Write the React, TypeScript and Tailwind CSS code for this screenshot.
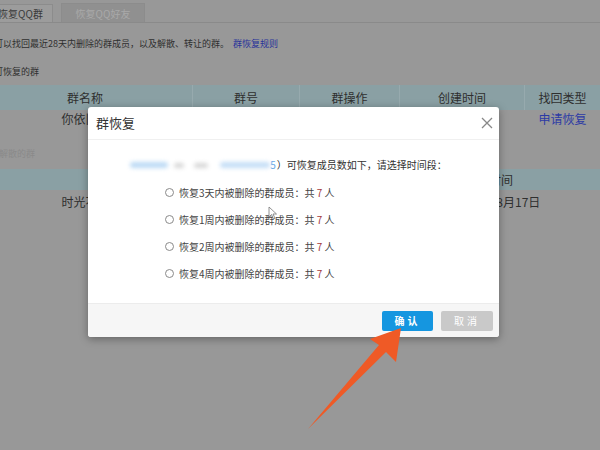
import React from 'react';

const font = { fontFamily: '"Noto Sans CJK SC", "Noto Sans", sans-serif' };

const options = ['恢复3天内被删除的群成员', '恢复1周内被删除的群成员', '恢复2周内被删除的群成员', '恢复4周内被删除的群成员'];

function Page() {
  return (
    <div className="h-[450px] w-[600px] overflow-hidden bg-[#989898] text-[#2f2f2f]" style={font}>
      {/* tabs */}
      <div className="flex h-[23px] items-end gap-[8px] border-b border-[#8a8a8a]">
        <div className="-ml-[12px] flex h-[18px] w-[65px] items-center justify-center border border-b-0 border-[#8c8c8c] bg-[#9c9c9c] text-[10px] text-[#3a3a3a]">
          恢复QQ群
        </div>
        <div className="flex h-[19px] w-[84px] items-center justify-center border border-b-0 border-[#8c8c8c] bg-[#909090] text-[10px] text-[#a9a9a9]">
          恢复QQ好友
        </div>
      </div>

      <div className="-ml-[6px] mt-[15px] text-[9px] leading-[12px]">
        可以找回最近28天内删除的群成员，以及解散、转让的群。 <span className="ml-[2px] text-[#28339a]">群恢复规则</span>
      </div>
      <div className="-ml-[6px] mt-[16px] text-[9px] leading-[12px]">可恢复的群</div>

      {/* first table */}
      <div className="-ml-[22px] mt-[7px] w-[622px]">
        <div className="grid h-[25px] grid-cols-[215px_107px_100px_125px_75px] bg-[#8aa0a4] text-[12px]">
          <div className="flex items-center justify-center border-r border-[#97aaae]">群名称</div>
          <div className="flex items-center justify-center border-r border-[#97aaae]">群号</div>
          <div className="flex items-center justify-center border-r border-[#97aaae]">群操作</div>
          <div className="flex items-center justify-center border-r border-[#97aaae]">创建时间</div>
          <div className="flex items-center justify-center">找回类型</div>
        </div>
        <div className="grid h-[18px] grid-cols-[215px_107px_100px_125px_75px] text-[12px]">
          <div className="flex items-center justify-center">你依旧在</div>
          <div />
          <div />
          <div />
          <div className="flex items-center justify-center text-[#2c3aa5]">申请恢复</div>
        </div>
      </div>

      <div className="-ml-[10px] mt-[20px] text-[9px] leading-[12px] text-[#8a8a8a]">已解散的群</div>

      {/* second table */}
      <div className="-ml-[22px] mt-[9px] w-[622px]">
        <div className="grid h-[21px] grid-cols-[215px_207px_200px] bg-[#8aa0a4] text-[12px]">
          <div />
          <div />
          <div className="flex items-center justify-center pr-[22px]">解散时间</div>
        </div>
        <div className="grid h-[24px] grid-cols-[215px_207px_200px] text-[12px]">
          <div className="flex items-center justify-center">时光不老</div>
          <div />
          <div className="flex items-center justify-center pr-[2px]">2019年8月17日</div>
        </div>
      </div>
    </div>
  );
}

function Dialog() {
  return (
    <div
      className="absolute left-[88px] top-[107px] flex h-[230px] w-[411px] flex-col overflow-hidden rounded-[3px] bg-white shadow-[0_2px_8px_rgba(0,0,0,0.35)]"
      style={font}
    >
      <div className="flex h-[33px] shrink-0 items-center justify-between border-b border-[#f0f0f0] pl-[8px] pr-[6px]">
        <span className="text-[13px] text-[#333]">群恢复</span>
        <svg width="12" height="12" viewBox="0 0 12 12" className="text-[#888]">
          <path d="M1 1L11 11M11 1L1 11" stroke="currentColor" strokeWidth="1.3" />
        </svg>
      </div>

      <div className="flex flex-1 flex-col">
        <div className="mt-[18px] flex items-center justify-center pr-[10px] text-[10px] leading-[14px] text-[#333]">
          <span className="inline-block h-[6px] w-[38px] rounded-full bg-[#bcdaf5] blur-[2px]" />
          <span className="ml-[6px] inline-block h-[5px] w-[10px] rounded-full bg-[#d6d6d6] blur-[2px]" />
          <span className="ml-[10px] inline-block h-[5px] w-[14px] rounded-full bg-[#d6d6d6] blur-[2px]" />
          <span className="ml-[12px] inline-block h-[6px] w-[50px] rounded-full bg-[#c4def6] blur-[2px]" />
          <span className="text-[#6aa8e6]">5</span>
          <span className="ml-[1px]">）可恢复成员数如下，请选择时间段：</span>
        </div>

        <div className="ml-[77px] mt-[13px] flex flex-col gap-[12px]">
          {options.map((o) => (
            <label key={o} className="flex h-[15px] items-center gap-[5px] text-[10px] text-[#444]">
              <span className="h-[9px] w-[9px] rounded-full border border-[#8a8a8a] bg-white" />
              <span>
                {o}：共 <span className="text-[#a33a3a]">7</span> 人
              </span>
            </label>
          ))}
        </div>
      </div>

      <div className="flex h-[34px] shrink-0 items-center justify-end gap-[8px] border-t border-[#ececec] bg-[#f6f6f6] pr-[6px]">
        <button className="h-[20px] w-[51px] rounded-[2px] bg-[#1596e0] text-[10px] font-bold tracking-[3px] text-white">
          确认
        </button>
        <button className="h-[20px] w-[52px] rounded-[2px] bg-[#c9c9c9] text-[10px] tracking-[3px] text-white">
          取消
        </button>
      </div>
    </div>
  );
}

export default function App() {
  return (
    <div className="relative h-[450px] w-[600px] overflow-hidden">
      <Page />
      <Dialog />
      {/* mouse pointer */}
      <svg className="absolute left-[268px] top-[206px]" width="10" height="14" viewBox="0 0 10 14">
        <path d="M1 1L1 11L3.5 8.5L5.5 13L7 12.3L5 8L8.5 8Z" fill="white" stroke="#777" strokeWidth="0.8" />
      </svg>
      {/* orange arrow */}
      <svg className="pointer-events-none absolute left-0 top-0" width="600" height="450" viewBox="0 0 600 450">
        <polygon points="401,328 396,362 386,352 308,429 379,345 370,339" fill="#ef5a26" />
      </svg>
    </div>
  );
}
